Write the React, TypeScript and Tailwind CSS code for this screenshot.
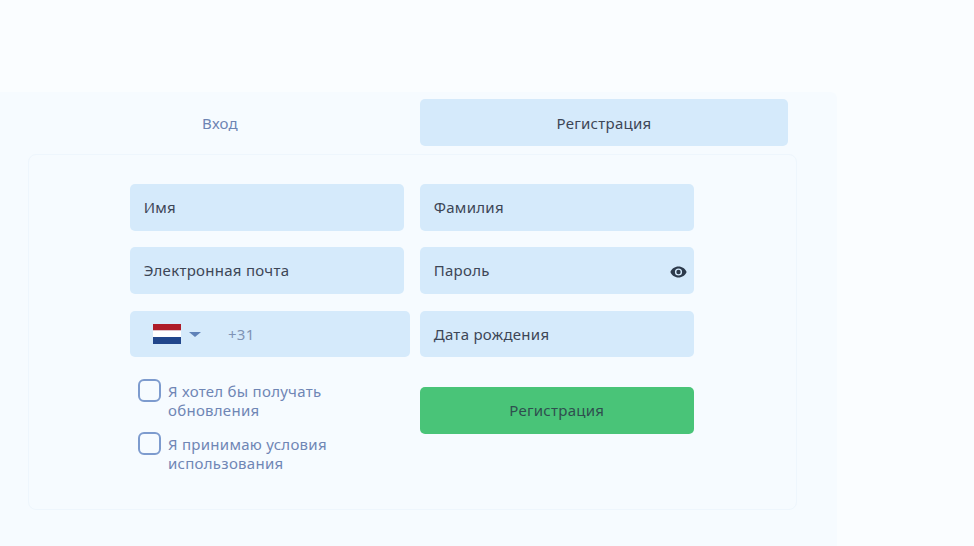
const inputClass =
  "flex h-[46.6px] w-[274.5px] items-center rounded-[5px] bg-[#d5eafb] px-[14.2px] text-[15px] tracking-[0.28px] text-[#3d4656]";

// Netherlands flag
const Flag = () => (
  <svg width="28" height="20" viewBox="0 0 28 20">
    <rect width="28" height="6.5" fill="#ae1c28" />
    <rect y="6.5" width="28" height="6.5" fill="#ffffff" />
    <rect y="13" width="28" height="7" fill="#21468b" />
  </svg>
);

const EyeIcon = () => (
  <svg width="17" height="12" viewBox="0 0 17 12" className="mt-[3px]">
    <path
      fillRule="evenodd"
      fill="#2c3a4b"
      d="M8.5 0.5C4.8 0.5 1.7 2.8 0.4 6c1.3 3.2 4.4 5.5 8.1 5.5s6.8-2.3 8.1-5.5C15.3 2.8 12.2 0.5 8.5 0.5zM8.5 9.6a3.6 3.6 0 1 1 0-7.2 3.6 3.6 0 0 1 0 7.2z"
    />
    <circle cx="8.5" cy="6" r="2.2" fill="#2c3a4b" />
  </svg>
);

const Check = ({ first, second }: { first: string; second: string }) => (
  <label className="flex items-start">
    <span className="h-[23px] w-[23px] shrink-0 rounded-[6px] border-2 border-[#7d9bce] bg-[#f6fbff]" />
    <span className="ml-[7.5px] mt-[3px] text-[15px] leading-[19px] tracking-[0.27px] text-[#6f86b5]">
      {first}
      <br />
      {second}
    </span>
  </label>
);

export default function App() {
  return (
    <div
      className="h-[546px] w-[974px] overflow-hidden bg-[#fafdff] pt-[92px]"
      style={{ fontFamily: '"Noto Sans", "Open Sans", sans-serif' }}
    >
      <div className="h-[454px] w-[837px] rounded-tr-[6px] bg-[#f6fbff] pl-[28px] pt-[7px]">
        <div className="flex h-[47px] w-[760px] items-center">
          <div className="mt-[1px] w-[384px] text-center text-[15px] tracking-[0.28px] text-[#6d84b3]">Вход</div>
          <div className="ml-[8px] flex h-[47px] w-[368px] items-center justify-center rounded-[5px] bg-[#d5eafb] pt-[1px] text-[15px] tracking-[0.28px] text-[#3d4656]">
            Регистрация
          </div>
        </div>

        <div className="mt-[8px] h-[356px] w-[769px] rounded-[8px] border border-[#eef6fd] pl-[100.5px] pt-[29px]">
          <div className="flex gap-[16px]">
            <div className="flex w-[274px] flex-col gap-[16.8px]">
              <div className={inputClass}>Имя</div>
              <div className={inputClass}>Электронная почта</div>
              <div className="flex h-[46.6px] w-[280px] items-center rounded-[5px] bg-[#d5eafb] pl-[23px] text-[15px] tracking-[0.28px] text-[#7f93b5]">
                <Flag />
                <span className="ml-[8px] h-0 w-0 border-x-[6px] border-t-[5px] border-x-transparent border-t-[#5f82b8]" />
                <span className="ml-[27.5px]">+31</span>
              </div>
              <div className="ml-[8px] mt-[4.5px] flex flex-col gap-[12px]">
                <Check first="Я хотел бы получать" second="обновления" />
                <Check first="Я принимаю условия" second="использования" />
              </div>
            </div>
            <div className="flex w-[274px] flex-col gap-[16.8px]">
              <div className={inputClass}>Фамилия</div>
              <div className={`${inputClass} justify-between pr-[7px]`}>
                <span>Пароль</span>
                <EyeIcon />
              </div>
              <div className={inputClass}>Дата рождения</div>
              <div className="mt-[12.5px] flex h-[47px] w-[274.5px] items-center justify-center rounded-[5px] bg-[#49c478] text-[15px] tracking-[0.28px] text-[#2f4f4f]">
                Регистрация
              </div>
            </div>
          </div>
        </div>
      </div>
    </div>
  );
}
